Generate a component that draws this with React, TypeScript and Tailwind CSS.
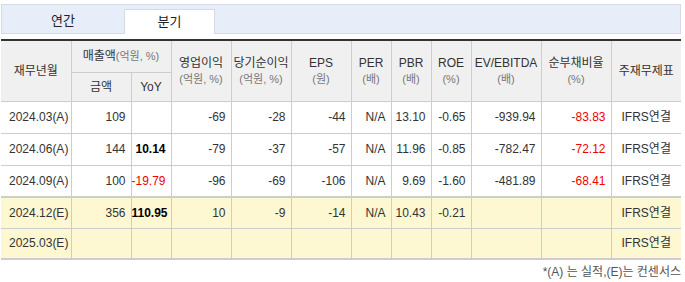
import React from 'react';

type Cell = { v: string; tone?: 'red' | 'bold' };

interface Row {
  period: string;
  est: boolean;
  cells: Cell[];
}

const c = (v: string, tone?: 'red' | 'bold'): Cell => ({ v, tone });

const rows: Row[] = [
  {
    period: '2024.03(A)',
    est: false,
    cells: [c('109'), c(''), c('-69'), c('-28'), c('-44'), c('N/A'), c('13.10'), c('-0.65'), c('-939.94'), c('-83.83', 'red')],
  },
  {
    period: '2024.06(A)',
    est: false,
    cells: [c('144'), c('10.14', 'bold'), c('-79'), c('-37'), c('-57'), c('N/A'), c('11.96'), c('-0.85'), c('-782.47'), c('-72.12', 'red')],
  },
  {
    period: '2024.09(A)',
    est: false,
    cells: [c('100'), c('-19.79', 'red'), c('-96'), c('-69'), c('-106'), c('N/A'), c('9.69'), c('-1.60'), c('-481.89'), c('-68.41', 'red')],
  },
  {
    period: '2024.12(E)',
    est: true,
    cells: [c('356'), c('110.95', 'bold'), c('10'), c('-9'), c('-14'), c('N/A'), c('10.43'), c('-0.21'), c(''), c('')],
  },
  {
    period: '2025.03(E)',
    est: true,
    cells: [c(''), c(''), c(''), c(''), c(''), c(''), c(''), c(''), c(''), c('')],
  },
];

const colWidths = ['w-[70px]', 'w-[60px]', 'w-[40px]', 'w-[60px]', 'w-[60px]', 'w-[60px]', 'w-[40px]', 'w-[40px]', 'w-[40px]', 'w-[70px]', 'w-[70px]', 'w-[70px]'];

const HeadTwo: React.FC<{ title: string; unit: string }> = ({ title, unit }) => (
  <th rowSpan={2} className="border-r border-b border-[#cdcdcd] font-normal text-[12px] leading-[16px] text-[#333] align-middle">
    <div className="whitespace-nowrap">{title}</div>
    <div className="whitespace-nowrap text-[11px] text-[#777]">{unit}</div>
  </th>
);

const toneClass = (tone?: 'red' | 'bold') =>
  tone === 'red' ? 'text-[#f00000]' : tone === 'bold' ? 'font-bold text-[#000]' : 'text-[#333]';

const App: React.FC = () => {
  return (
    <div className="w-[685px] h-[282px] bg-white overflow-hidden pt-[4px] pl-[1px] font-['Liberation_Sans','Noto_Sans_CJK_KR',sans-serif]">
      {/* tabs */}
      <div className="w-[680px] h-[30px] border border-[#d5dbe6] bg-[#e8eef9] flex items-end">
        <div className="w-[122px] h-[24px] flex items-center justify-center text-[13px] text-[#222]">연간</div>
        <div className="w-[91px] h-[25px] -mb-px bg-white border-l border-t border-r border-[#d5dbe6] flex items-center justify-center text-[13px] text-[#222]">
          분기
        </div>
      </div>

      <table className="mt-[5px] w-[680px] table-fixed border-collapse">
        <colgroup>
          {colWidths.map((w, i) => (
            <col key={i} className={w} />
          ))}
        </colgroup>
        <thead className="bg-[#f0f0f0]">
          <tr className="h-[32px] border-t-2 border-[#333]">
            <th rowSpan={2} className="border-r border-b border-[#cdcdcd] font-normal text-[12px] text-[#333]">재무년월</th>
            <th colSpan={2} className="border-r border-b border-[#cdcdcd] font-normal text-[12px] text-[#333] whitespace-nowrap">
              매출액<span className="text-[11px] text-[#777]">(억원, %)</span>
            </th>
            <HeadTwo title="영업이익" unit="(억원, %)" />
            <HeadTwo title="당기순이익" unit="(억원, %)" />
            <HeadTwo title="EPS" unit="(원)" />
            <HeadTwo title="PER" unit="(배)" />
            <HeadTwo title="PBR" unit="(배)" />
            <HeadTwo title="ROE" unit="(%)" />
            <HeadTwo title="EV/EBITDA" unit="(배)" />
            <HeadTwo title="순부채비율" unit="(%)" />
            <th rowSpan={2} className="border-b border-[#cdcdcd] font-normal text-[12px] text-[#333]">주재무제표</th>
          </tr>
          <tr className="h-[29px]">
            <th className="border-r border-b border-[#cdcdcd] font-normal text-[12px] text-[#333]">금액</th>
            <th className="border-r border-b border-[#cdcdcd] font-normal text-[12px] text-[#333]">YoY</th>
          </tr>
        </thead>
        <tbody>
          {rows.map((row, ri) => (
            <tr
              key={row.period}
              className={`${row.est ? 'bg-[#fdf8d2] h-[31px]' : 'h-[32px]'} ${ri === 2 ? 'border-b-2' : ri === 4 ? 'border-b-2' : 'border-b'} border-[#cdcdcd]`}
            >
              <td className="border-r border-[#cdcdcd] pl-[8px] text-[12px] text-[#333] whitespace-nowrap">{row.period}</td>
              {row.cells.map((cell, ci) => (
                <td key={ci} className={`border-r border-[#cdcdcd] pr-[5px] text-right text-[12px] whitespace-nowrap ${toneClass(cell.tone)}`}>
                  {cell.v}
                </td>
              ))}
              <td className="text-center text-[12px] text-[#333] whitespace-nowrap">IFRS연결</td>
            </tr>
          ))}
        </tbody>
      </table>

      <div className="w-[680px] mt-[4px] text-right text-[12px] leading-[16px] text-[#555] whitespace-nowrap">
        *(A) 는 실적,(E)는 컨센서스
      </div>
    </div>
  );
};

export default App;
